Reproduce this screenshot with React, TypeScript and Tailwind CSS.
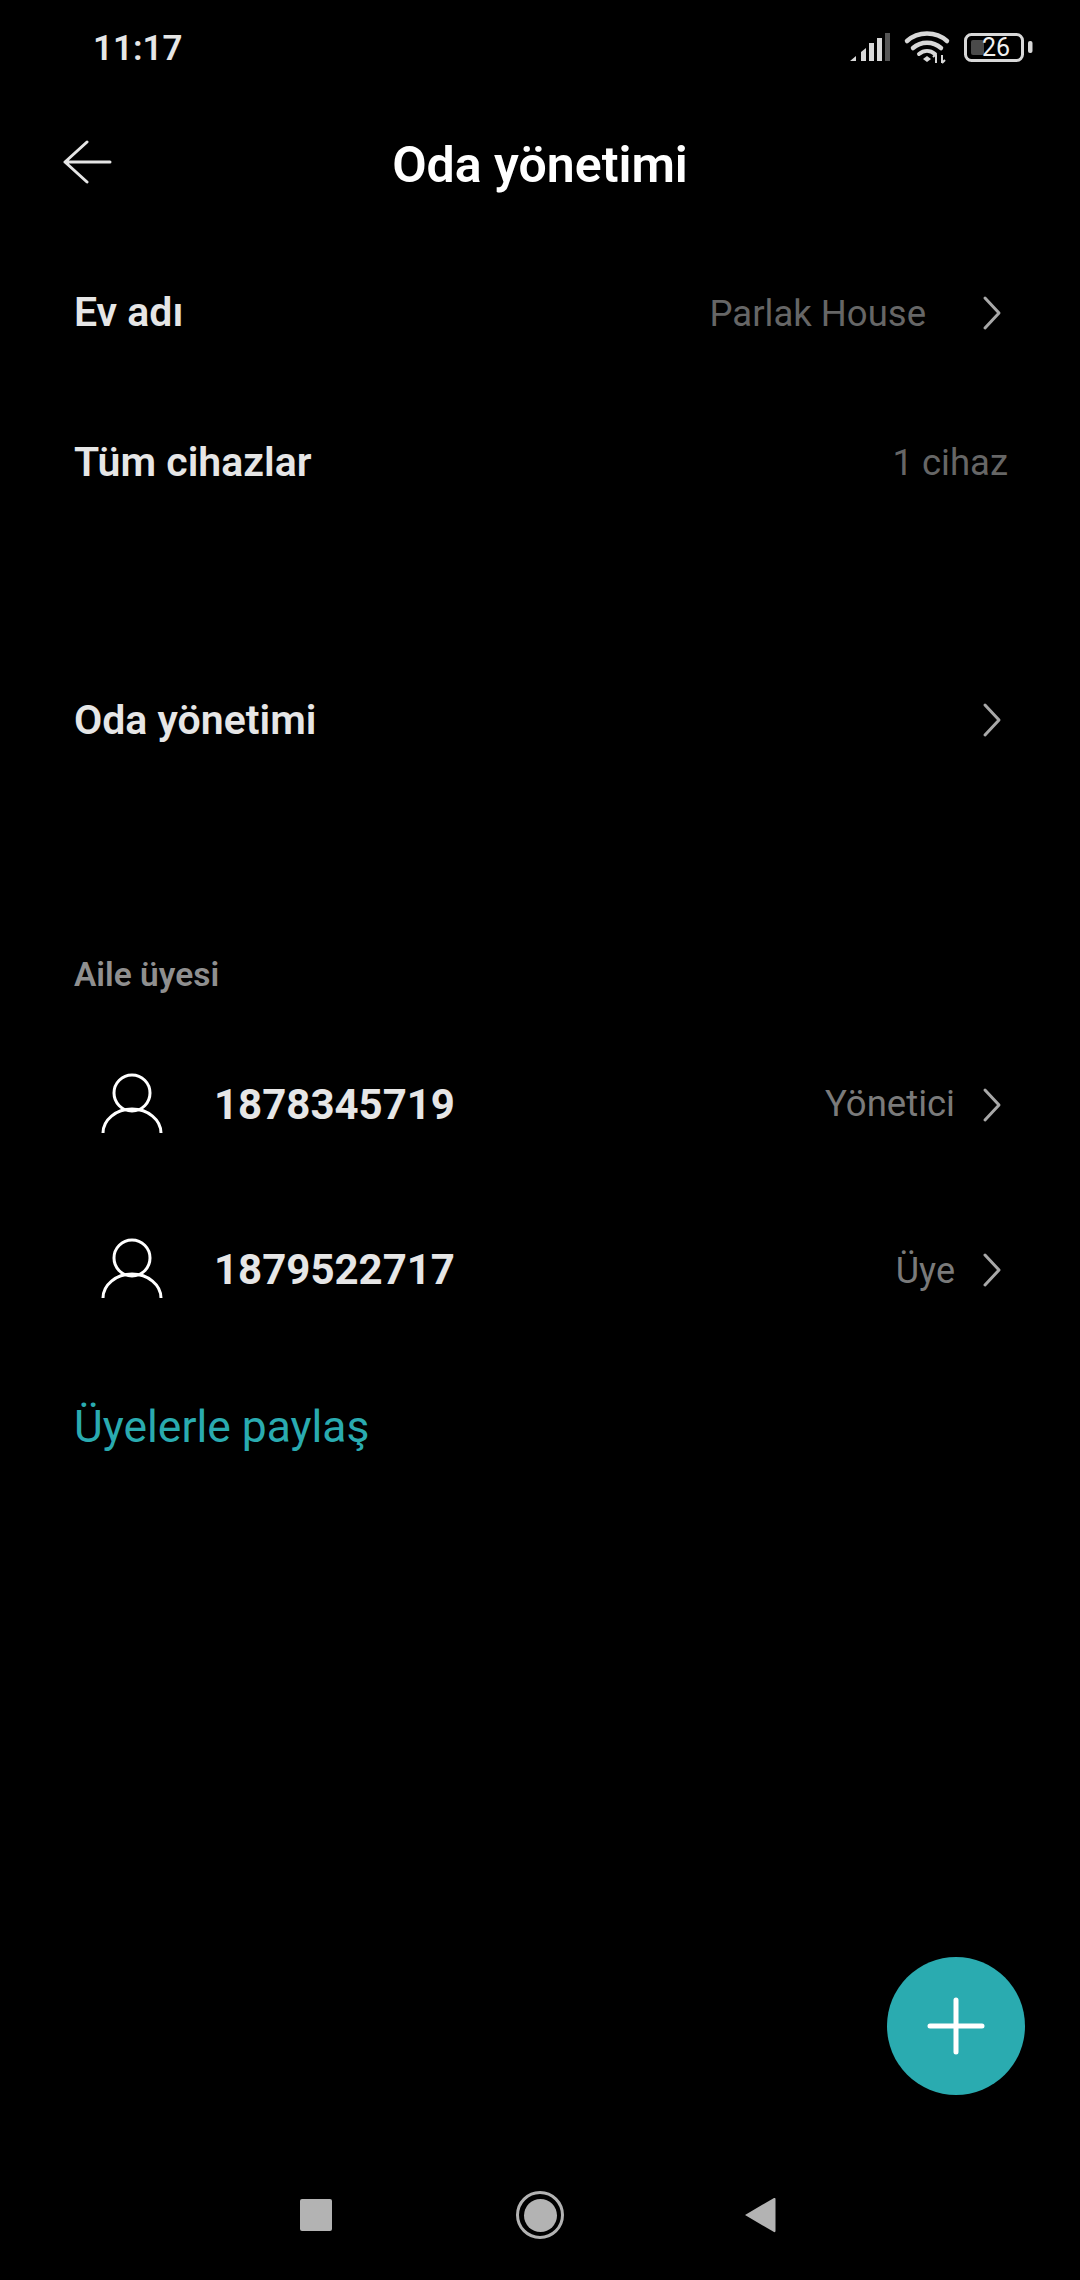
import React from 'react';

const Chevron = () => (
  <svg width="20" height="36" viewBox="0 0 20 36" fill="none" className="shrink-0">
    <path d="M3 3 L17 18 L3 33" stroke="#a8a8a8" strokeWidth="3" strokeLinecap="round" strokeLinejoin="round" />
  </svg>
);

const PersonIcon = () => (
  <svg width="64" height="64" viewBox="0 0 64 64" fill="none" className="shrink-0">
    <circle cx="32" cy="20" r="18" stroke="#fff" strokeWidth="3" />
    <path d="M3 60 A29 24 0 0 1 61 60" stroke="#fff" strokeWidth="3" />
  </svg>
);

const StatusIcons = () => (
  <svg width="184" height="34" viewBox="0 0 184 34" fill="none" className="shrink-0">
    <path d="M0 30 L6 25 V30 Z M11 21 L16 17 V30 H11 Z" fill="#d8d8d8" />
    <rect x="19" y="12" width="5" height="18" fill="#d8d8d8" />
    <rect x="27" y="7" width="5" height="23" fill="#d8d8d8" />
    <rect x="35" y="2" width="5" height="28" fill="#555" />
    <path d="M57 10 C68 0 86 0 97 10" stroke="#d8d8d8" strokeWidth="4.5" strokeLinecap="round" />
    <path d="M63 17 C71 10 83 10 91 17" stroke="#d8d8d8" strokeWidth="4.5" strokeLinecap="round" />
    <path d="M69 23 C74 19 80 19 85 23" stroke="#d8d8d8" strokeWidth="4" strokeLinecap="round" />
    <path d="M73 28 L77 25 L81 28 L77 31 Z" fill="#d8d8d8" />
    <path d="M86 32 V24 M83 26 L86 23 M92 24 V32 M92 32 L95 29" stroke="#d8d8d8" strokeWidth="2" />
    <rect x="115.5" y="3.5" width="57" height="26" rx="6" stroke="#d8d8d8" strokeWidth="3" />
    <rect x="121" y="9" width="13" height="15" rx="2" fill="#4a4a4a" />
    <rect x="178" y="10" width="4.5" height="12" rx="2" fill="#d8d8d8" />
  </svg>
);

const rowLabel = 'text-[41px] font-semibold text-[#e6e6e6]';

const App: React.FC = () => {
  return (
    <div className="relative w-[1080px] h-[2280px] bg-black flex flex-col font-['Roboto',sans-serif]">
      {/* status bar */}
      <div className="h-[96px] flex items-center justify-between pl-[93px] pr-[46px]">
        <span className="pt-[2px] text-[35px] font-semibold text-[#e6e6e6]">11:17</span>
        <div className="relative">
          <StatusIcons />
          <span className="absolute left-[132px] top-[4px] text-[25px] leading-[26px] text-[#f0f0f0]">26</span>
        </div>
      </div>

      {/* header */}
      <div className="relative h-[142px] flex items-center justify-center pb-[4px]">
        <svg width="50" height="44" viewBox="0 0 50 44" fill="none" className="absolute left-[63px] top-[44px]">
          <path d="M2 22 H47 M24 2 L2 22 L24 42" stroke="#e6e6e6" strokeWidth="3" strokeLinecap="round" strokeLinejoin="round" />
        </svg>
        <h1 className="text-[50px] font-semibold text-white">Oda yönetimi</h1>
      </div>

      <div className="h-[150px] flex items-center pl-[74px] pr-[78px]">
        <span className={rowLabel}>Ev adı</span>
        <span className="ml-auto mr-[56px] pt-[2px] text-[36.5px] text-[#666666]">Parlak House</span>
        <Chevron />
      </div>

      <div className="h-[149px] flex items-center justify-between pl-[74px] pr-[72px]">
        <span className={rowLabel}>Tüm cihazlar</span>
        <span className="pt-[2px] text-[36.5px] text-[#666666]">1 cihaz</span>
      </div>

      <div className="mt-[108px] h-[150px] flex items-center justify-between pl-[74px] pr-[78px]">
        <span className={`${rowLabel} pt-[2px]`}>Oda yönetimi</span>
        <Chevron />
      </div>

      {/* members */}
      <div className="h-[227px] pt-[161px] pl-[74px]">
        <span className="block text-[33.5px] leading-[38px] font-semibold text-[#8f8f8f]">Aile üyesi</span>
      </div>

      <div className="h-[165px] flex items-center pl-[100px] pr-[78px]">
        <PersonIcon />
        <span className="ml-[50px] text-[42px] font-bold text-[#e6e6e6]">1878345719</span>
        <span className="ml-auto mr-[27px] text-[36.5px] text-[#7a7a7a]">Yönetici</span>
        <Chevron />
      </div>

      <div className="h-[165px] flex items-center pl-[100px] pr-[78px]">
        <PersonIcon />
        <span className="ml-[50px] text-[42px] font-bold text-[#e6e6e6]">1879522717</span>
        <span className="ml-auto mr-[27px] pt-[2px] text-[36px] text-[#7a7a7a]">Üye</span>
        <Chevron />
      </div>

      <div className="h-[150px] flex items-center pl-[74px]">
        <span className="text-[44.4px] text-[#2aabb0]">Üyelerle paylaş</span>
      </div>

      {/* add button */}
      <button className="absolute left-[887px] top-[1957px] w-[138px] h-[138px] rounded-full bg-[#2aabb0] flex items-center justify-center">
        <svg width="58" height="58" viewBox="0 0 58 58" fill="none">
          <path d="M29 3 V55 M3 29 H55" stroke="#fff" strokeWidth="5" strokeLinecap="round" />
        </svg>
      </button>

      {/* nav bar */}
      <div className="mt-auto h-[114px] flex items-start pt-[31px] pl-[300px]">
        <div className="mt-[2px] w-[32px] h-[32px] rounded-[2px] bg-[#b3b3b3]" />
        <div className="ml-[184px] -mt-[6px] w-[48px] h-[48px] rounded-full border-[3px] border-[#b3b3b3] flex items-center justify-center">
          <div className="w-[33px] h-[33px] rounded-full bg-[#b3b3b3]" />
        </div>
        <svg width="32" height="36" viewBox="0 0 32 36" className="ml-[180px]">
          <path d="M1 18 L30 1 Q31.5 0.5 31.5 2 V34 Q31.5 35.5 30 35 Z" fill="#b3b3b3" />
        </svg>
      </div>
    </div>
  );
};

export default App;
